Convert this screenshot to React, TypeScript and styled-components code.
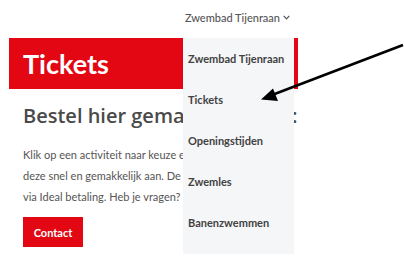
import React from "react";
import styled, { createGlobalStyle } from "styled-components";

const Global = createGlobalStyle`
  html, body { margin: 0; padding: 0; background: #ffffff; }
  body { font-family: Lato, "Open Sans", sans-serif; }
  * { box-sizing: border-box; }
`;

const Screen = styled.div`
  position: relative;
  width: 404px;
  height: 261px;
  overflow: hidden;
  display: flex;
  background: #ffffff;
`;

const Page = styled.div`
  position: relative;
  width: 298px;
  height: 261px;
  overflow: hidden;
  flex: none;
`;

const TopBar = styled.div`
  height: 38px;
  padding: 0 8px 4px 0;
  display: flex;
  align-items: center;
  justify-content: flex-end;
`;

const NavItem = styled.div`
  display: flex;
  align-items: center;
  gap: 3px;
  font-size: 11px;
  font-weight: 500;
  color: #555555;
  white-space: nowrap;
`;

const Banner = styled.div`
  margin-left: 9px;
  height: 51px;
  background: #e30613;
  display: flex;
  align-items: center;
  padding-left: 14px;
`;

const Title = styled.h1`
  margin: 0;
  font-size: 27px;
  line-height: 1;
  font-weight: 700;
  color: #ffffff;
`;

const Section = styled.div`
  padding-left: 23px;
`;

const Heading = styled.h2`
  margin: 15px 0 0;
  font-family: "Open Sans", Lato, sans-serif;
  font-size: 20px;
  line-height: 23px;
  font-weight: 600;
  color: #4a4a4a;
  white-space: nowrap;
`;

const Paragraph = styled.p`
  margin: 17px 0 0;
  font-size: 11px;
  line-height: 21px;
  color: #555555;
  white-space: nowrap;
`;

const Button = styled.div`
  margin-top: 10px;
  width: 60px;
  height: 30px;
  background: #e30613;
  color: #ffffff;
  font-size: 11px;
  font-weight: 700;
  display: flex;
  align-items: center;
  justify-content: center;
`;

const Dropdown = styled.div`
  position: absolute;
  left: 183px;
  top: 38px;
  width: 111px;
  height: 216px;
  background: #f5f6f8;
  padding: 0 0 11px 5px;
  display: flex;
  flex-direction: column;
`;

const MenuItem = styled.div`
  height: 41px;
  display: flex;
  align-items: center;
  font-size: 11px;
  font-weight: 700;
  color: #424242;
  white-space: nowrap;
`;

const Annotation = styled.svg`
  position: absolute;
  left: 0;
  top: 0;
  pointer-events: none;
`;

const menu = ["Zwembad Tijenraan", "Tickets", "Openingstijden", "Zwemles", "Banenzwemmen"];

export default function App() {
  return (
    <>
      <Global />
      <Screen>
        <Page>
          <TopBar>
            <NavItem>
              Zwembad Tijenraan
              <svg width="7" height="5" viewBox="0 0 7 5">
                <path d="M0.7 0.8 L3.5 3.8 L6.3 0.8" fill="none" stroke="#555" strokeWidth="1.2" />
              </svg>
            </NavItem>
          </TopBar>
          <Banner>
            <Title>Tickets</Title>
          </Banner>
          <Section>
            <Heading>Bestel hier gemakkelijk snel:</Heading>
            <Paragraph>
              Klik op een activiteit naar keuze en boek je tickets!
              <br />
              deze snel en gemakkelijk aan. De betaling gaat via:
              <br />
              via Ideal betaling. Heb je vragen? Neem contact op)
            </Paragraph>
            <Button>Contact</Button>
          </Section>
          <Dropdown>
            {menu.map((m) => (
              <MenuItem key={m}>{m}</MenuItem>
            ))}
          </Dropdown>
        </Page>
        <Annotation width="404" height="261" viewBox="0 0 404 261">
          <line x1="403" y1="45" x2="272" y2="95" stroke="#000" strokeWidth="2.6" />
          <polygon points="261,99.5 273,88.5 278,101" fill="#000" />
        </Annotation>
      </Screen>
    </>
  );
}
